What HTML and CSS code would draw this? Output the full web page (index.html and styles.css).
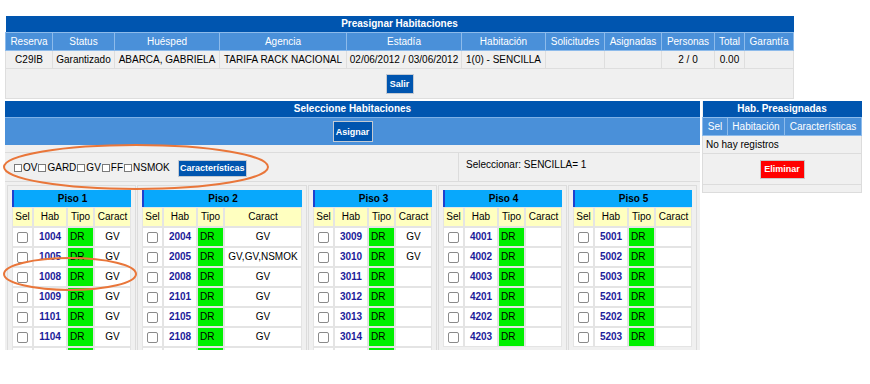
FILE: index.html
```html
<!DOCTYPE html>
<html lang="es">
<head>
    <meta charset="UTF-8">
    <title>Preasignar Habitaciones</title>
    <link rel="stylesheet" href="styles.css">
</head>
<body>
<div class="page">
    <table class="resumen">
        <colgroup>
            <col class="c-reserva"><col class="c-status"><col class="c-huesped"><col class="c-agencia">
            <col class="c-estadia"><col class="c-habitacion"><col class="c-solicitudes"><col class="c-asignadas">
            <col class="c-personas"><col class="c-total"><col class="c-garantia">
        </colgroup>
        <tr><td class="titulo" colspan="11">Preasignar Habitaciones</td></tr>
        <tr>
            <th>Reserva</th>
            <th>Status</th>
            <th>Huésped</th>
            <th>Agencia</th>
            <th>Estadía</th>
            <th>Habitación</th>
            <th>Solicitudes</th>
            <th>Asignadas</th>
            <th>Personas</th>
            <th>Total</th>
            <th>Garantía</th>
        </tr>
        <tr class="fila">
            <td>C29IB</td>
            <td>Garantizado</td>
            <td>ABARCA, GABRIELA</td>
            <td>TARIFA RACK NACIONAL</td>
            <td>02/06/2012 / 03/06/2012</td>
            <td>1(0) - SENCILLA</td>
            <td></td>
            <td></td>
            <td>2 / 0</td>
            <td>0.00</td>
            <td></td>
        </tr>
        <tr class="acciones"><td colspan="11"><button class="btn btn-salir">Salir</button></td></tr>
    </table>

    <div class="asignacion">
        <div class="seleccion">
            <div class="barra-titulo">Seleccione Habitaciones</div>
            <div class="barra-clara"><button class="btn btn-asignar">Asignar</button></div>
            <div class="fila-vacia"></div>
            <div class="filtros">
                <div class="filtros-opciones">
                    <label class="opcion"><input type="checkbox" class="chk-mini">OV</label>
                    <label class="opcion"><input type="checkbox" class="chk-mini">GARD</label>
                    <label class="opcion"><input type="checkbox" class="chk-mini">GV</label>
                    <label class="opcion"><input type="checkbox" class="chk-mini">FF</label>
                    <label class="opcion"><input type="checkbox" class="chk-mini">NSMOK</label>
                    <button class="btn btn-caract">Características</button>
                </div>
                <div class="filtros-info">Seleccionar: SENCILLA= 1</div>
            </div>

            <div class="pisos">
                <div class="piso-celda">
                    <table class="piso piso-angosto">
                        <colgroup><col class="col-sel"><col class="col-hab"><col class="col-tipo"><col></colgroup>
                        <tr class="piso-nombre"><td colspan="4">Piso 1</td></tr>
                        <tr class="piso-cols"><td>Sel</td><td>Hab</td><td>Tipo</td><td>Caract</td></tr>
                        <tr><td><input type="checkbox" class="chk"></td><td class="hab">1004</td><td class="tipo">DR</td><td>GV</td></tr>
                        <tr><td><input type="checkbox" class="chk"></td><td class="hab">1005</td><td class="tipo">DR</td><td>GV</td></tr>
                        <tr><td><input type="checkbox" class="chk"></td><td class="hab">1008</td><td class="tipo">DR</td><td>GV</td></tr>
                        <tr><td><input type="checkbox" class="chk"></td><td class="hab">1009</td><td class="tipo">DR</td><td>GV</td></tr>
                        <tr><td><input type="checkbox" class="chk"></td><td class="hab">1101</td><td class="tipo">DR</td><td>GV</td></tr>
                        <tr><td><input type="checkbox" class="chk"></td><td class="hab">1104</td><td class="tipo">DR</td><td>GV</td></tr>
                        <tr><td></td><td></td><td class="tipo"></td><td></td></tr>
                    </table>
                </div>
                <div class="piso-celda">
                    <table class="piso piso-ancho">
                        <colgroup><col class="col-sel"><col class="col-hab"><col class="col-tipo"><col></colgroup>
                        <tr class="piso-nombre"><td colspan="4">Piso 2</td></tr>
                        <tr class="piso-cols"><td>Sel</td><td>Hab</td><td>Tipo</td><td>Caract</td></tr>
                        <tr><td><input type="checkbox" class="chk"></td><td class="hab">2004</td><td class="tipo">DR</td><td>GV</td></tr>
                        <tr><td><input type="checkbox" class="chk"></td><td class="hab">2005</td><td class="tipo">DR</td><td>GV,GV,NSMOK</td></tr>
                        <tr><td><input type="checkbox" class="chk"></td><td class="hab">2008</td><td class="tipo">DR</td><td>GV</td></tr>
                        <tr><td><input type="checkbox" class="chk"></td><td class="hab">2101</td><td class="tipo">DR</td><td>GV</td></tr>
                        <tr><td><input type="checkbox" class="chk"></td><td class="hab">2105</td><td class="tipo">DR</td><td>GV</td></tr>
                        <tr><td><input type="checkbox" class="chk"></td><td class="hab">2108</td><td class="tipo">DR</td><td>GV</td></tr>
                        <tr><td></td><td></td><td class="tipo"></td><td></td></tr>
                    </table>
                </div>
                <div class="piso-celda">
                    <table class="piso piso-angosto">
                        <colgroup><col class="col-sel"><col class="col-hab"><col class="col-tipo"><col></colgroup>
                        <tr class="piso-nombre"><td colspan="4">Piso 3</td></tr>
                        <tr class="piso-cols"><td>Sel</td><td>Hab</td><td>Tipo</td><td>Caract</td></tr>
                        <tr><td><input type="checkbox" class="chk"></td><td class="hab">3009</td><td class="tipo">DR</td><td>GV</td></tr>
                        <tr><td><input type="checkbox" class="chk"></td><td class="hab">3010</td><td class="tipo">DR</td><td>GV</td></tr>
                        <tr><td><input type="checkbox" class="chk"></td><td class="hab">3011</td><td class="tipo">DR</td><td></td></tr>
                        <tr><td><input type="checkbox" class="chk"></td><td class="hab">3012</td><td class="tipo">DR</td><td></td></tr>
                        <tr><td><input type="checkbox" class="chk"></td><td class="hab">3013</td><td class="tipo">DR</td><td></td></tr>
                        <tr><td><input type="checkbox" class="chk"></td><td class="hab">3014</td><td class="tipo">DR</td><td></td></tr>
                        <tr><td></td><td></td><td class="tipo"></td><td></td></tr>
                    </table>
                </div>
                <div class="piso-celda">
                    <table class="piso piso-angosto">
                        <colgroup><col class="col-sel"><col class="col-hab"><col class="col-tipo"><col></colgroup>
                        <tr class="piso-nombre"><td colspan="4">Piso 4</td></tr>
                        <tr class="piso-cols"><td>Sel</td><td>Hab</td><td>Tipo</td><td>Caract</td></tr>
                        <tr><td><input type="checkbox" class="chk"></td><td class="hab">4001</td><td class="tipo">DR</td><td></td></tr>
                        <tr><td><input type="checkbox" class="chk"></td><td class="hab">4002</td><td class="tipo">DR</td><td></td></tr>
                        <tr><td><input type="checkbox" class="chk"></td><td class="hab">4003</td><td class="tipo">DR</td><td></td></tr>
                        <tr><td><input type="checkbox" class="chk"></td><td class="hab">4201</td><td class="tipo">DR</td><td></td></tr>
                        <tr><td><input type="checkbox" class="chk"></td><td class="hab">4202</td><td class="tipo">DR</td><td></td></tr>
                        <tr><td><input type="checkbox" class="chk"></td><td class="hab">4203</td><td class="tipo">DR</td><td></td></tr>
                    </table>
                </div>
                <div class="piso-celda">
                    <table class="piso piso-angosto">
                        <colgroup><col class="col-sel"><col class="col-hab"><col class="col-tipo"><col></colgroup>
                        <tr class="piso-nombre"><td colspan="4">Piso 5</td></tr>
                        <tr class="piso-cols"><td>Sel</td><td>Hab</td><td>Tipo</td><td>Caract</td></tr>
                        <tr><td><input type="checkbox" class="chk"></td><td class="hab">5001</td><td class="tipo">DR</td><td></td></tr>
                        <tr><td><input type="checkbox" class="chk"></td><td class="hab">5002</td><td class="tipo">DR</td><td></td></tr>
                        <tr><td><input type="checkbox" class="chk"></td><td class="hab">5003</td><td class="tipo">DR</td><td></td></tr>
                        <tr><td><input type="checkbox" class="chk"></td><td class="hab">5201</td><td class="tipo">DR</td><td></td></tr>
                        <tr><td><input type="checkbox" class="chk"></td><td class="hab">5202</td><td class="tipo">DR</td><td></td></tr>
                        <tr><td><input type="checkbox" class="chk"></td><td class="hab">5203</td><td class="tipo">DR</td><td></td></tr>
                    </table>
                </div>
            </div>
        </div>

        <div class="preasignadas">
            <table class="pre-tabla">
                <colgroup><col class="p-sel"><col class="p-hab"><col></colgroup>
                <tr><td class="titulo" colspan="3">Hab. Preasignadas</td></tr>
                <tr>
                    <th>Sel</th>
                    <th>Habitación</th>
                    <th>Características</th>
                </tr>
                <tr class="sin-registros"><td colspan="3">No hay registros</td></tr>
                <tr class="pre-acciones"><td colspan="3"><button class="btn btn-eliminar">Eliminar</button></td></tr>
                <tr class="pre-pie"><td colspan="3"></td></tr>
            </table>
        </div>
    </div>

    <!-- marcas de revisión -->
    <svg class="marcas" width="870" height="384" viewBox="0 0 870 384">
        <ellipse cx="136" cy="167" rx="132" ry="22" fill="none" stroke="#e9763a" stroke-width="2"/>
        <ellipse cx="70" cy="274" rx="66" ry="16" fill="none" stroke="#e9763a" stroke-width="2"/>
    </svg>
</div>
</body>
</html>
```

FILE: styles.css
```css
body {
    margin: 0;
    font-family: "Liberation Sans", Arial, sans-serif;
    font-size: 10px;
    line-height: 12px;
    color: #000;
    background: #fff;
}
.page {
    position: relative;
    height: 384px;
    padding: 16px 0 0 5px;
    box-sizing: border-box;
    overflow: hidden;
}
table {
    font-size: 10px;
}
.titulo {
    background-color: #0055af;
    color: #fff;
    font-weight: bold;
    text-align: center;
    height: 16px;
    padding: 0;
}

/* tabla de la reserva */
.resumen {
    width: 788px;
    border-collapse: collapse;
    table-layout: fixed;
}
.resumen th {
    background-color: #4a90d9;
    color: #fff;
    font-weight: normal;
    height: 17px;
    padding: 0;
    border: 1px solid #8dbbeb;
    white-space: nowrap;
}
.resumen .fila td {
    background-color: #f0f0f0;
    height: 17px;
    padding: 0;
    text-align: center;
    white-space: nowrap;
    border: 1px solid #dedede;
}
.resumen .acciones td {
    background-color: #f0f0f0;
    height: 29px;
    padding: 0;
    text-align: center;
    border: 1px solid #dedede;
}
.c-reserva { width: 47px; }
.c-status { width: 62px; }
.c-huesped { width: 105px; }
.c-agencia { width: 127px; }
.c-estadia { width: 115px; }
.c-habitacion { width: 84px; }
.c-solicitudes { width: 59px; }
.c-asignadas { width: 57px; }
.c-personas { width: 53px; }
.c-total { width: 30px; }
.c-garantia { width: 49px; }

/* botones */
.btn {
    font-family: "Liberation Sans", Arial, sans-serif;
    font-size: 9px;
    font-weight: bold;
    color: #fff;
    background-color: #0055af;
    border: 1px solid #c4cad2;
    padding: 0;
    vertical-align: middle;
}
.btn-salir {
    width: 28px;
    height: 20px;
}
.btn-asignar {
    width: 40px;
    height: 21px;
}
.btn-caract {
    width: 69px;
    height: 17px;
    margin-left: 7px;
}
.btn-eliminar {
    width: 45px;
    height: 19px;
    background-color: #f00;
    border-color: #c8c8c8;
}

/* zona de asignacion */
.asignacion {
    display: flex;
    align-items: flex-start;
    gap: 2px;
    margin-top: 2px;
}
.seleccion {
    width: 695px;
    background-color: #f0f0f0;
}
.barra-titulo {
    background-color: #0055af;
    color: #fff;
    font-weight: bold;
    text-align: center;
    height: 16px;
    line-height: 16px;
}
.barra-clara {
    background-color: #4a90d9;
    height: 28px;
    border-top: 1px solid #7eb0e6;
    box-sizing: border-box;
    display: flex;
    align-items: center;
    justify-content: center;
}
.fila-vacia {
    height: 8px;
    border-bottom: 1px solid #dcdcdc;
    box-sizing: border-box;
}
.filtros {
    display: flex;
    height: 29px;
    border-bottom: 1px solid #dcdcdc;
    box-sizing: border-box;
}
.filtros-opciones {
    width: 454px;
    display: flex;
    align-items: center;
    padding: 2px 0 0 9px;
    box-sizing: border-box;
    border-right: 1px solid #dcdcdc;
}
.opcion {
    display: inline-flex;
    align-items: center;
    margin-right: 1px;
}
.chk-mini {
    appearance: none;
    width: 8px;
    height: 8px;
    margin: 0 1px 0 0;
    border: 1px solid #7a7a7a;
    background: #fff;
}
.filtros-info {
    padding: 6px 0 0 7px;
}

/* pisos */
.pisos {
    display: flex;
    gap: 1px;
    height: 168px;
    padding: 3px 0 0 2px;
    box-sizing: border-box;
    overflow: hidden;
}
.piso-celda {
    border: 1px solid #dcdcdc;
    padding: 4px;
    align-self: flex-start;
}
.piso {
    border-collapse: separate;
    border-spacing: 0;
    table-layout: fixed;
    background-color: #fff;
}
.piso-angosto { width: 119px; }
.piso-ancho { width: 160px; }
.piso td {
    height: 18px;
    padding: 0;
    border: 1px solid #e4e4e4;
    text-align: center;
    white-space: nowrap;
    overflow: hidden;
}
.piso .piso-nombre td {
    height: 17px;
    background-color: #08a8fc;
    border: 0;
    border-left: 2px solid #1f3fce;
    font-weight: bold;
}
.piso .piso-cols td {
    background-color: #ffffc0;
}
.col-sel { width: 21px; }
.col-hab { width: 34px; }
.col-tipo { width: 27px; }
.piso .hab {
    color: #1c1c9a;
    font-weight: bold;
}
.piso .tipo {
    background-color: #00f000;
    background-clip: padding-box;
    text-align: left;
    padding-left: 2px;
}
.chk {
    appearance: none;
    width: 11px;
    height: 11px;
    margin: 0;
    border: 1px solid #8a8a8a;
    border-radius: 2px;
    background: #fff;
    vertical-align: middle;
}

/* habitaciones preasignadas */
.preasignadas {
    width: 160px;
    background-color: #f0f0f0;
}
.pre-tabla {
    width: 160px;
    border-collapse: collapse;
    table-layout: fixed;
}
.pre-tabla th {
    background-color: #4a90d9;
    color: #fff;
    font-weight: normal;
    height: 17px;
    padding: 0;
    border: 1px solid #8dbbeb;
    white-space: nowrap;
}
.p-sel { width: 25px; }
.p-hab { width: 57px; }
.sin-registros td {
    height: 17px;
    padding: 0 0 0 3px;
    border: 1px solid #dcdcdc;
}
.pre-acciones td {
    height: 30px;
    padding: 0;
    text-align: center;
    border: 1px solid #dcdcdc;
}
.pre-pie td {
    height: 7px;
    padding: 0;
    border: 1px solid #dcdcdc;
}

.marcas {
    position: absolute;
    top: 0;
    left: 0;
    pointer-events: none;
}
```
